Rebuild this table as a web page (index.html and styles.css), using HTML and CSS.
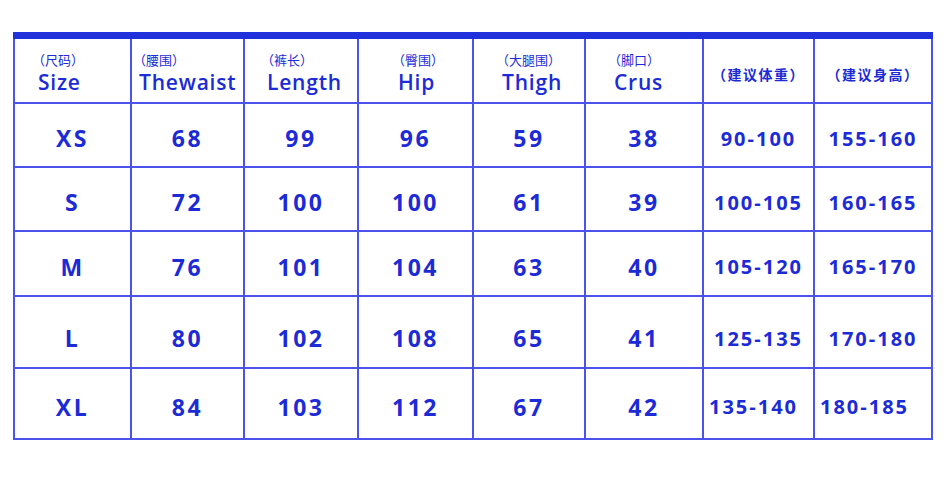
FILE: index.html
```html
<!DOCTYPE html>
<html lang="zh">
<head>
<meta charset="utf-8">
<title>Size chart</title>
<link rel="stylesheet" href="styles.css">
</head>
<body>
<div class="chart">
  <div class="topbar"></div>
  <div class="grid">
    <div class="cell head h1"><span class="cn">（尺码）</span><span class="en">Size</span></div>
    <div class="cell head h2"><span class="cn">（腰围）</span><span class="en">Thewaist</span></div>
    <div class="cell head h3"><span class="cn">（裤长）</span><span class="en">Length</span></div>
    <div class="cell head h4"><span class="cn">（臀围）</span><span class="en">Hip</span></div>
    <div class="cell head h5"><span class="cn">（大腿围）</span><span class="en">Thigh</span></div>
    <div class="cell head h6"><span class="cn">（脚口）</span><span class="en">Crus</span></div>
    <div class="cell head hc"><span class="cn2">（建议体重）</span></div>
    <div class="cell head hc"><span class="cn2">（建议身高）</span></div>

    <div class="cell val">XS</div><div class="cell val">68</div><div class="cell val">99</div><div class="cell val">96</div><div class="cell val">59</div><div class="cell val">38</div><div class="cell rng">90-100</div><div class="cell rng">155-160</div>
    <div class="cell val">S</div><div class="cell val">72</div><div class="cell val">100</div><div class="cell val">100</div><div class="cell val">61</div><div class="cell val">39</div><div class="cell rng">100-105</div><div class="cell rng">160-165</div>
    <div class="cell val">M</div><div class="cell val">76</div><div class="cell val">101</div><div class="cell val">104</div><div class="cell val">63</div><div class="cell val">40</div><div class="cell rng">105-120</div><div class="cell rng">165-170</div>
    <div class="cell val low">L</div><div class="cell val low">80</div><div class="cell val low">102</div><div class="cell val low">108</div><div class="cell val low">65</div><div class="cell val low">41</div><div class="cell rng low">125-135</div><div class="cell rng low">170-180</div>
    <div class="cell val">XL</div><div class="cell val">84</div><div class="cell val">103</div><div class="cell val">112</div><div class="cell val">67</div><div class="cell val">42</div><div class="cell rng left">135-140</div><div class="cell rng left">180-185</div>
  </div>
</div>
</body>
</html>
```
FILE: styles.css
```css
html, body {
  margin: 0;
  padding: 0;
  background: #ffffff;
}
body {
  font-family: "Open Sans", "Noto Sans CJK SC", sans-serif;
  color: #1c2bd6;
}
.chart {
  padding: 32px 0 0 13px;
  width: 920px;
}
.topbar {
  height: 7px;
  width: 920px;
  background: #2131dc;
}
.grid {
  display: grid;
  grid-template-columns: 117px 113px 114px 115px 112px 118px 111px 118px;
  grid-template-rows: 65px 64px 64px 65px 72px 71px;
  border-left: 2px solid #4c52ec;
  width: 918px;
}
.cell {
  box-sizing: border-box;
  border-right: 2px solid #4c52ec;
  border-bottom: 2px solid #4c52ec;
  display: flex;
  align-items: center;
  justify-content: center;
}
.head {
  flex-direction: column;
  align-items: flex-start;
  justify-content: flex-start;
  padding-top: 14px;
}
.cn {
  font-family: "Noto Sans CJK SC", sans-serif;
  font-size: 13px;
  line-height: 14px;
  margin-left: -6px;
  margin-bottom: 4px;
}
.en {
  font-size: 21px;
  font-weight: 600;
  line-height: 22px;
  letter-spacing: 0.8px;
}
.h1 { padding-left: 23px; }
.h2 { padding-left: 7px; }
.h3 { padding-left: 22px; }
.h4 { padding-left: 39px; }
.h5 { padding-left: 28px; }
.h6 { padding-left: 28px; }
.hc {
  align-items: center;
  justify-content: center;
  padding-top: 6px;
}
.cn2 {
  font-family: "Noto Sans CJK SC", sans-serif;
  font-size: 14px;
  font-weight: 700;
  letter-spacing: 1.5px;
}
.val {
  font-size: 23px;
  font-weight: 700;
  letter-spacing: 2.5px;
  padding-top: 6px;
}
.rng {
  font-size: 20px;
  font-weight: 700;
  letter-spacing: 2px;
  padding-top: 6px;
}
.low { padding-top: 12px; }
.left { justify-content: flex-start; padding-left: 5px; }
```
